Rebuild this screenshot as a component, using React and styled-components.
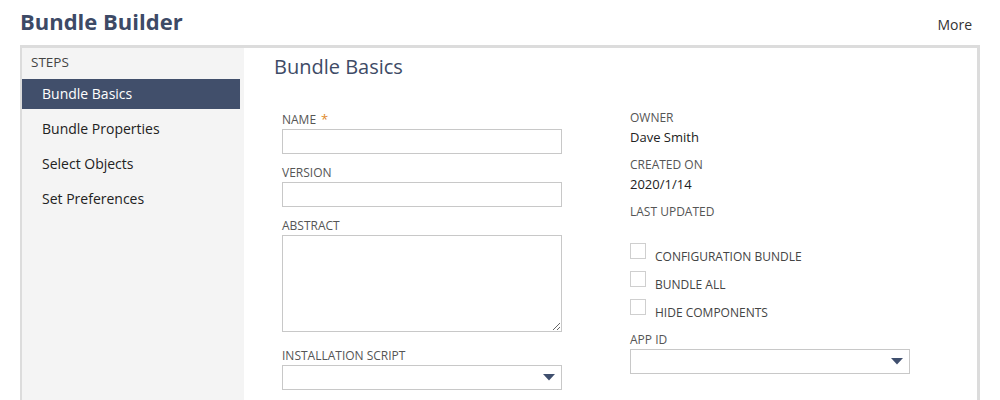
import React from 'react';
import styled, { createGlobalStyle } from 'styled-components';

const GlobalStyle = createGlobalStyle`
    body {
        margin: 0;
        background: #fff;
        font-family: "Open Sans", "Liberation Sans", sans-serif;
        color: #333;
    }
`

const Page = styled.div`
    width: 1000px;
    height: 400px;
    overflow: hidden;
`

const Header = styled.div`
    display: flex;
    justify-content: space-between;
    align-items: center;
    height: 45px;
    padding: 0 28px 0 20px;
`

const Title = styled.h1`
    margin: 0;
    font-size: 22px;
    font-weight: 700;
    color: #3d4a66;
    line-height: 40px;
    margin-top: -3px;
`

const More = styled.span`
    font-size: 14px;
    color: #333;
    margin-top: 3px;
`

const Frame = styled.div`
    margin: 0 20px;
    border: 2px solid #dcdcdc;
    border-top-width: 3px;
    border-right-width: 3px;
    border-bottom: none;
    display: flex;
    height: 400px;
`

const Sidebar = styled.div`
    width: 222px;
    background: #f4f4f4;
    padding-top: 5px;
`

const StepsLabel = styled.div`
    font-size: 13.5px;
    color: #444;
    line-height: 18px;
    padding: 0 0 8px 9px;
`

const StepItem = styled.div`
    width: 218px;
    height: 30px;
    line-height: 30px;
    box-sizing: border-box;
    padding-left: 20px;
    font-size: 14px;
    margin-bottom: 5px;
    color: ${p => (p.active ? '#fff' : '#222')};
    background: ${p => (p.active ? '#414f6b' : 'transparent')};
`

const Content = styled.div`
    flex: 1;
    padding: 5px 0 0 30px;
`

const Heading = styled.h2`
    margin: 0;
    font-size: 20px;
    font-weight: 400;
    color: #3e4b66;
    line-height: 28px;
`

const Columns = styled.div`
    display: flex;
    gap: 68px;
    padding: 30px 0 0 8px;
`

const Column = styled.div`
    width: 280px;
    display: flex;
    flex-direction: column;
`

const Label = styled.div`
    font-size: 12px;
    line-height: 16px;
    color: #555;
    text-transform: uppercase;
    margin-top: ${p => p.gap || 0}px;
    margin-bottom: ${p => p.below ?? 1}px;
`

const Required = styled.span`
    color: #e08a2a;
    margin-left: 5px;
    font-size: 13px;
`

const TextInput = styled.div`
    height: 25px;
    box-sizing: border-box;
    border: 1px solid #c8c8c8;
    background: #fff;
`

const TextArea = styled.textarea`
    display: block;
    height: 97px;
    width: 280px;
    box-sizing: border-box;
    border: 1px solid #c8c8c8;
    margin: 0;
    resize: vertical;
    outline: none;
`

const Select = styled.div`
    height: 25px;
    box-sizing: border-box;
    border: 1px solid #c8c8c8;
    background: #fff;
    display: flex;
    align-items: center;
    justify-content: flex-end;
    padding-right: 6px;
`

const Value = styled.div`
    font-size: 13px;
    line-height: 16px;
    color: #222;
    margin-top: 2px;
`

const CheckRow = styled.div`
    display: flex;
    align-items: flex-start;
    height: 28px;
    margin-top: ${p => p.gap || 0}px;
`

const Box = styled.span`
    width: 16px;
    height: 16px;
    box-sizing: border-box;
    border: 1px solid #cfcfcf;
    background: #fff;
    margin-right: 9px;
`

const CheckLabel = styled.span`
    font-size: 12px;
    line-height: 16px;
    color: #444;
    text-transform: uppercase;
    margin-top: 6px;
`

const Arrow = () => (
    <svg width="12" height="7" viewBox="0 0 12 7">
        <path d="M0 0 H12 L6 6.5 Z" fill="#3f4f6e" />
    </svg>
)

const steps = ['Bundle Basics', 'Bundle Properties', 'Select Objects', 'Set Preferences'];

const App = () => {
    return (
        <Page>
            <GlobalStyle />
            <Header>
                <Title>Bundle Builder</Title>
                <More>More</More>
            </Header>
            <Frame>
                <Sidebar>
                    <StepsLabel>STEPS</StepsLabel>
                    {steps.map((s, i) => (
                        <StepItem key={s} active={i === 0}>{s}</StepItem>
                    ))}
                </Sidebar>
                <Content>
                    <Heading>Bundle Basics</Heading>
                    <Columns>
                        <Column>
                            <Label>Name<Required>*</Required></Label>
                            <TextInput />
                            <Label gap={11}>Version</Label>
                            <TextInput />
                            <Label gap={11}>Abstract</Label>
                            <TextArea />
                            <Label gap={16}>Installation Script</Label>
                            <Select><Arrow /></Select>
                        </Column>
                        <Column>
                            <Label gap={-1}>Owner</Label>
                            <Value>Dave Smith</Value>
                            <Label gap={12}>Created On</Label>
                            <Value>2020/1/14</Value>
                            <Label gap={12}>Last Updated</Label>
                            <CheckRow gap={22}>
                                <Box />
                                <CheckLabel>Configuration Bundle</CheckLabel>
                            </CheckRow>
                            <CheckRow>
                                <Box />
                                <CheckLabel>Bundle All</CheckLabel>
                            </CheckRow>
                            <CheckRow>
                                <Box />
                                <CheckLabel>Hide Components</CheckLabel>
                            </CheckRow>
                            <Label gap={5} below={1}>App ID</Label>
                            <Select><Arrow /></Select>
                        </Column>
                    </Columns>
                </Content>
            </Frame>
        </Page>
    )
}

export default App;
